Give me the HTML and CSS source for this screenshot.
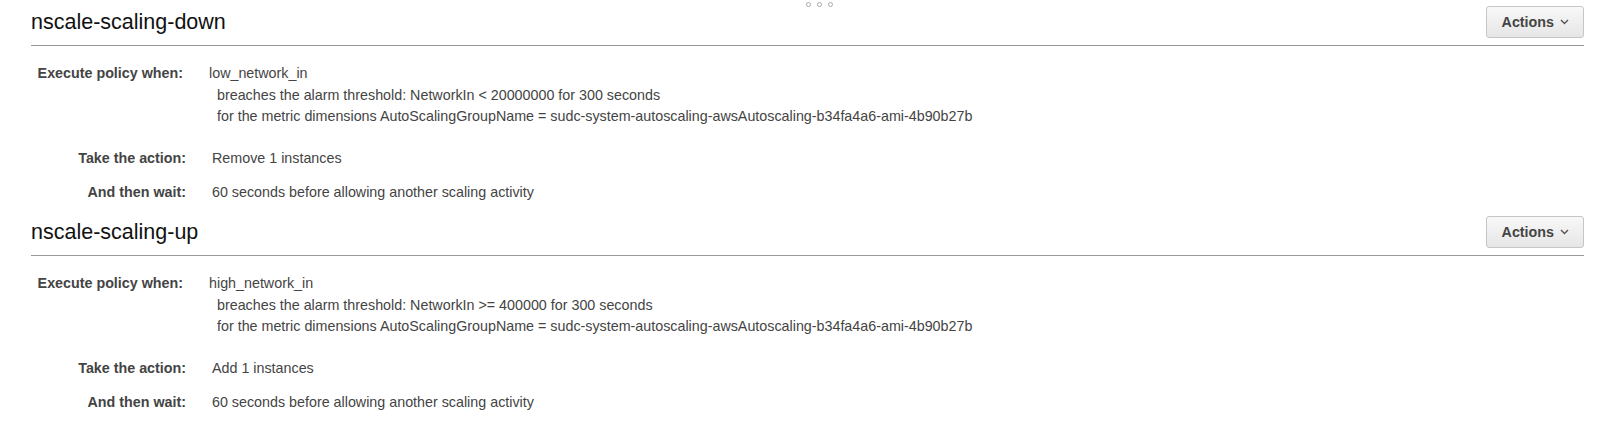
FILE: index.html
```html
<!DOCTYPE html>
<html>
<head>
<meta charset="utf-8">
<link rel="stylesheet" href="styles.css">
</head>
<body>
<div class="handle"><span class="dot"></span><span class="dot"></span><span class="dot"></span></div>
<div class="page">
  <section class="policy">
    <div class="policy-head">
      <h2 class="policy-title">nscale-scaling-down</h2>
      <button class="actions">Actions <span class="caret"><svg width="9" height="6" viewBox="0 0 9 6"><path d="M1 1 L4.5 4.5 L8 1" fill="none" stroke="#555" stroke-width="1.4"/></svg></span></button>
    </div>
    <div class="policy-body">
      <div class="row row-first">
        <div class="label label-first">Execute policy when:</div>
        <div class="value">
          <div>low_network_in</div>
          <div class="sub">breaches the alarm threshold: NetworkIn &lt; 20000000 for 300 seconds</div>
          <div class="sub">for the metric dimensions AutoScalingGroupName = sudc-system-autoscaling-awsAutoscaling-b34fa4a6-ami-4b90b27b</div>
        </div>
      </div>
      <div class="row row-action">
        <div class="label">Take the action:</div>
        <div class="value">Remove 1 instances</div>
      </div>
      <div class="row row-wait">
        <div class="label">And then wait:</div>
        <div class="value">60 seconds before allowing another scaling activity</div>
      </div>
    </div>
  </section>
  <section class="policy">
    <div class="policy-head">
      <h2 class="policy-title">nscale-scaling-up</h2>
      <button class="actions">Actions <span class="caret"><svg width="9" height="6" viewBox="0 0 9 6"><path d="M1 1 L4.5 4.5 L8 1" fill="none" stroke="#555" stroke-width="1.4"/></svg></span></button>
    </div>
    <div class="policy-body">
      <div class="row row-first">
        <div class="label label-first">Execute policy when:</div>
        <div class="value">
          <div>high_network_in</div>
          <div class="sub">breaches the alarm threshold: NetworkIn &gt;= 400000 for 300 seconds</div>
          <div class="sub">for the metric dimensions AutoScalingGroupName = sudc-system-autoscaling-awsAutoscaling-b34fa4a6-ami-4b90b27b</div>
        </div>
      </div>
      <div class="row row-action">
        <div class="label">Take the action:</div>
        <div class="value">Add 1 instances</div>
      </div>
      <div class="row row-wait">
        <div class="label">And then wait:</div>
        <div class="value">60 seconds before allowing another scaling activity</div>
      </div>
    </div>
  </section>
</div>
</body>
</html>
```
FILE: styles.css
```css
html, body {
  margin: 0;
  padding: 0;
  background: #fff;
}
body {
  font-family: "Liberation Sans", Arial, sans-serif;
  color: #444;
  font-size: 14.3px;
  position: relative;
  width: 1610px;
  height: 440px;
  overflow: hidden;
}
.handle {
  position: absolute;
  top: 2px;
  left: 806px;
  display: flex;
  gap: 6px;
}
.dot {
  width: 5px;
  height: 5px;
  border: 1px solid #aaa;
  border-radius: 50%;
  box-sizing: border-box;
}
.page {
  padding: 0 26px 0 31px;
}
.policy {
  height: 210px;
}
.policy-head {
  display: flex;
  align-items: center;
  justify-content: space-between;
  padding: 6px 0 7px 0;
  border-bottom: 1px solid #999;
}
.policy-title {
  margin: 0;
  font-size: 21.5px;
  font-weight: normal;
  color: #111;
  line-height: 32px;
}
.actions {
  height: 32px;
  padding: 0 14px 0 15px;
  font-family: "Liberation Sans", Arial, sans-serif;
  font-size: 14.3px;
  font-weight: bold;
  color: #444;
  background: linear-gradient(#f8f8f8, #e6e6e6);
  border: 1px solid #c6c6c6;
  border-radius: 3px;
  display: flex;
  align-items: center;
  gap: 6px;
}
.caret {
  display: flex;
  align-items: center;
}
.policy-body {
  padding-top: 17px;
  line-height: 21.5px;
}
.row {
  display: flex;
  gap: 26px;
}
.label {
  width: 155px;
  text-align: right;
  font-weight: bold;
  flex-shrink: 0;
}
.label-first {
  width: 152px;
}
.sub {
  padding-left: 8px;
}
.row-action {
  margin-top: 20px;
}
.row-wait {
  margin-top: 13px;
}
```
